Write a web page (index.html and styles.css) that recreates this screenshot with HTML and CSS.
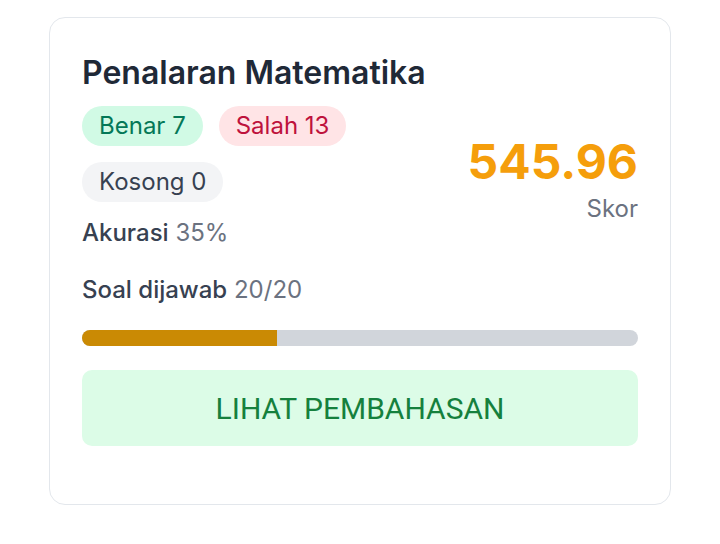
FILE: index.html
```html
<!DOCTYPE html>
<html lang="id">
<head>
<meta charset="utf-8">
<title>Penalaran Matematika</title>
<link rel="stylesheet" href="styles.css">
</head>
<body>
<div class="page">
  <div class="card">
    <div class="head">
      <div class="info">
        <h2 class="title">Penalaran Matematika</h2>
        <div class="badges">
          <span class="badge badge-ok">Benar 7</span>
          <span class="badge badge-bad">Salah 13</span>
          <span class="badge badge-empty">Kosong 0</span>
        </div>
        <div class="stat stat-acc"><span class="label">Akurasi</span> <span class="value">35%</span></div>
        <div class="stat stat-ans"><span class="label">Soal dijawab</span> <span class="value">20/20</span></div>
      </div>
      <div class="score">
        <div class="score-num">545.96</div>
        <div class="score-label">Skor</div>
      </div>
    </div>
    <div class="bar"><div class="bar-fill" style="width:35%"></div></div>
    <button class="btn">LIHAT PEMBAHASAN</button>
  </div>
</div>
</body>
</html>
```

FILE: styles.css
```css
* { box-sizing: border-box; }
html, body { margin: 0; padding: 0; background: #ffffff; }
body { font-family: Inter, "Noto Sans", sans-serif; color: #1f2937; }

.page { padding: 17px 49px; }

.card {
  border: 1px solid #e3e7ec;
  border-radius: 16px;
  padding: 32px 32px 32px;
  background: #fff;
  display: flex;
  flex-direction: column;
}

.head {
  display: flex;
  align-items: center;
  gap: 24px;
}
.info { flex: 1; min-width: 0; }

.title {
  margin: 0;
  font-size: 32px;
  line-height: 45px;
  font-weight: 600;
  color: #1f2937;
}

.badges {
  display: flex;
  flex-wrap: wrap;
  gap: 16px;
  margin-top: 11px;
}
.badge {
  display: inline-block;
  font-size: 24px;
  line-height: 32px;
  padding: 4px 17px;
  border-radius: 999px;
}
.badge-ok { background: #d1fae5; color: #047857; }
.badge-bad { background: #ffe4e6; color: #be123c; }
.badge-empty { background: #f3f4f6; color: #374151; }

.stat {
  font-size: 24px;
  line-height: 32px;
}
.stat-acc { margin-top: 15px; }
.stat-ans { margin-top: 25px; }
.stat .label { color: #374151; font-weight: 500; }
.stat .value { color: #6b7280; }

.score { text-align: right; }
.score-num {
  font-size: 48px;
  line-height: 58px;
  font-weight: 700;
  color: #f59e0b;
}
.score-label {
  margin-top: 3px;
  font-size: 24px;
  line-height: 30px;
  color: #6b7280;
}

.bar {
  margin-top: 24px;
  height: 16px;
  border-radius: 999px;
  background: #d1d5db;
  overflow: hidden;
}
.bar-fill { height: 100%; background: #ca8a04; }

.btn {
  margin-top: 24px;
  margin-bottom: 26px;
  height: 76px;
  border: 0;
  border-radius: 10px;
  background: #dcfce7;
  color: #15803d;
  font-family: Roboto, "Liberation Sans", sans-serif;
  font-size: 30px;
  font-weight: 400;
}
```
